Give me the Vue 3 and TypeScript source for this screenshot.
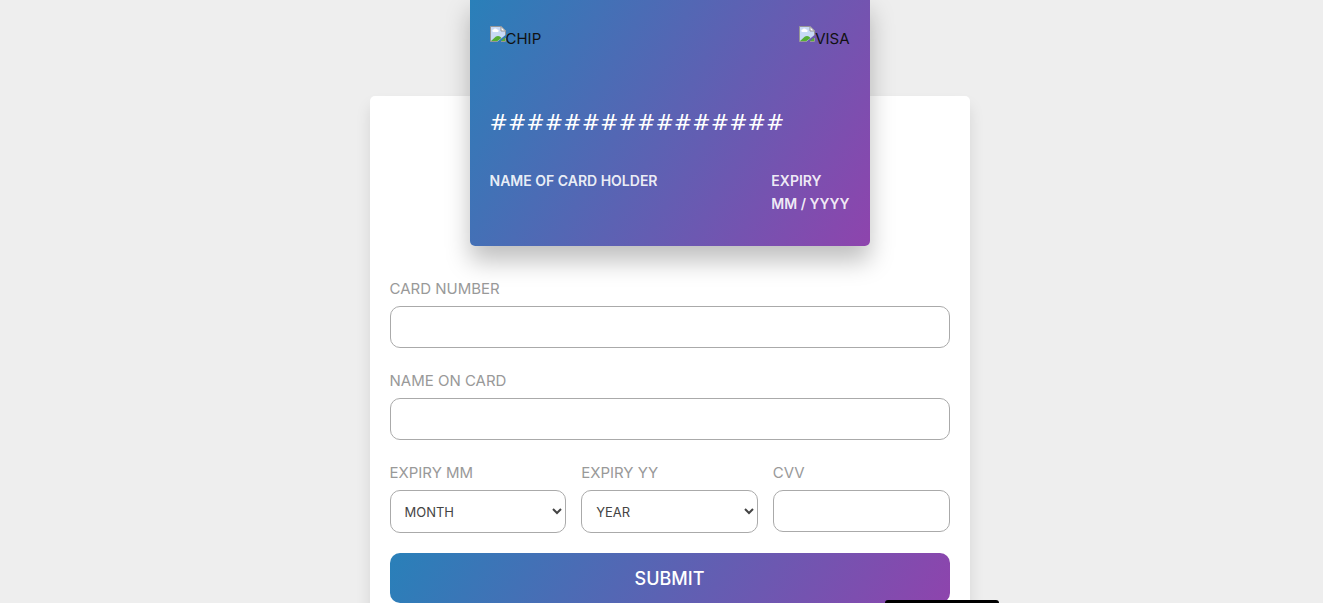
<script setup lang="ts">
import { computed, ref } from 'vue'

const cardNumber = ref('')
const cardHolder = ref('')
const month = ref('')
const year = ref('')
const cvv = ref('')

const months = Array.from({ length: 12 }, (_, i) => String(i + 1).padStart(2, '0'))
const years = Array.from({ length: 10 }, (_, i) => String(2021 + i))

const shownNumber = computed(() => cardNumber.value || '#'.repeat(16))
const shownHolder = computed(() => cardHolder.value || 'name of card holder')
const shownExpiry = computed(() => `${month.value || 'mm'} / ${year.value || 'yyyy'}`)
const marks = ['chip', 'visa']
</script>

<template>
  <main class="page">
    <section class="card">
      <div class="marks">
        <div v-for="mark in marks" :key="mark" class="mark">
          <svg class="mark-icon" viewBox="0 0 16 16" aria-hidden="true">
            <path d="M0.5 0.5H11L15.5 4.5V9L7.5 15.5H0.5Z" fill="#c8daf6" />
            <path d="M3.5 6a1.2 1.2 0 0 1 0-2.4a2 2 0 0 1 3.6 0a1.2 1.2 0 0 1 .6 2.4Z" fill="#fff" />
            <path d="M1 15C3.5 13.5 5 10 8 10C9.5 10 10.5 10.8 11.5 12L7.5 15Z" fill="#56ae35" />
            <path d="M11 15L15 11.5V15Z" fill="#56ae35" />
            <path d="M7.5 15.5H0.5V0.5H11L15.5 5V9M15.5 12V15.5H11" fill="none" stroke="#969696" />
            <path d="M11 0.5V5H15.5Z" fill="#fff" stroke="#969696" />
          </svg>
          <span>{{ mark }}</span>
        </div>
      </div>
      <div class="number">{{ shownNumber }}</div>
      <div class="details">
        <div>{{ shownHolder }}</div>
        <div>
          <div>expiry</div>
          <div>{{ shownExpiry }}</div>
        </div>
      </div>
    </section>

    <form class="form" @submit.prevent>
      <div class="field">
        <label for="number">card number</label>
        <input id="number" v-model="cardNumber" type="text" maxlength="16" />
      </div>
      <div class="field">
        <label for="holder">name on card</label>
        <input id="holder" v-model="cardHolder" type="text" />
      </div>
      <div class="row">
        <div class="field">
          <label for="month">expiry mm</label>
          <select id="month" v-model="month">
            <option value="" disabled>MONTH</option>
            <option v-for="m in months" :key="m" :value="m">{{ m }}</option>
          </select>
        </div>
        <div class="field">
          <label for="year">expiry yy</label>
          <select id="year" v-model="year">
            <option value="" disabled>YEAR</option>
            <option v-for="y in years" :key="y" :value="y">{{ y }}</option>
          </select>
        </div>
        <div class="field">
          <label for="cvv">cvv</label>
          <input id="cvv" v-model="cvv" type="text" maxlength="4" />
        </div>
      </div>
      <button class="submit" type="submit">submit</button>
    </form>
    <div class="tab"></div>
  </main>
</template>

<style>
body {
  margin: 0;
  overflow: hidden;
  background: #eee;
}
</style>

<style scoped>
* {
  box-sizing: border-box;
}

.page {
  position: relative;
  display: flex;
  flex-direction: column;
  align-items: center;
  height: 100vh;
  padding-left: 16px;
  overflow: hidden;
  background: #eee;
  font-family: Inter, "Open Sans", sans-serif;
  font-size: 15px;
  line-height: 26px;
  text-transform: uppercase;
}

.card {
  position: relative;
  z-index: 1;
  flex: none;
  width: 100%;
  max-width: 400px;
  height: 250px;
  margin-top: -4px;
  margin-bottom: -150px;
  padding: 20px;
  border-radius: 5px;
  background: linear-gradient(120deg, #2980b9, #8e44ad);
  box-shadow: 0 15px 25px rgba(0, 0, 0, 0.25);
}

.marks {
  display: flex;
  justify-content: space-between;
  padding-top: 10px;
  color: #111;
}

.mark {
  display: flex;
  height: 50px;
}

.mark-icon {
  width: 16px;
  height: 16px;
}

.number {
  padding: 30px 0;
  color: #fff;
  font-family: "DejaVu Sans", sans-serif;
  font-size: 22px;
  line-height: 33px;
}

.details {
  display: flex;
  justify-content: space-between;
  color: rgba(255, 255, 255, 0.9);
  font-size: 14px;
  font-weight: 600;
  line-height: 23px;
}

.form {
  flex: none;
  width: 100%;
  max-width: 600px;
  padding: 160px 20px 40px;
  border-radius: 5px;
  background: #fff;
  box-shadow: 0 10px 15px rgba(0, 0, 0, 0.1);
}

.field {
  flex: 1;
  min-width: 0;
  padding-top: 20px;
}

.field label {
  display: block;
  padding-bottom: 4px;
  color: #999;
}

.field input,
.field select {
  display: block;
  width: 100%;
  height: 42px;
  padding: 10px;
  border: 1px solid #aaa;
  border-radius: 10px;
  outline: none;
  background: #fff;
  color: #444;
  font-family: inherit;
  font-size: 13px;
}

.field select {
  height: 43px;
}

.row {
  display: flex;
  gap: 15px;
}

.submit {
  display: block;
  width: 100%;
  height: 50px;
  margin-top: 20px;
  padding: 0;
  border: 0;
  border-radius: 10px;
  background: linear-gradient(120deg, #2980b9, #8e44ad);
  color: #fff;
  font-family: inherit;
  font-size: 18px;
  font-weight: 500;
  text-transform: uppercase;
  cursor: pointer;
}

.tab {
  position: absolute;
  z-index: 2;
  right: 324px;
  bottom: 0;
  width: 114px;
  height: 3px;
  border-radius: 4px 4px 0 0;
  background: #000;
}
</style>
